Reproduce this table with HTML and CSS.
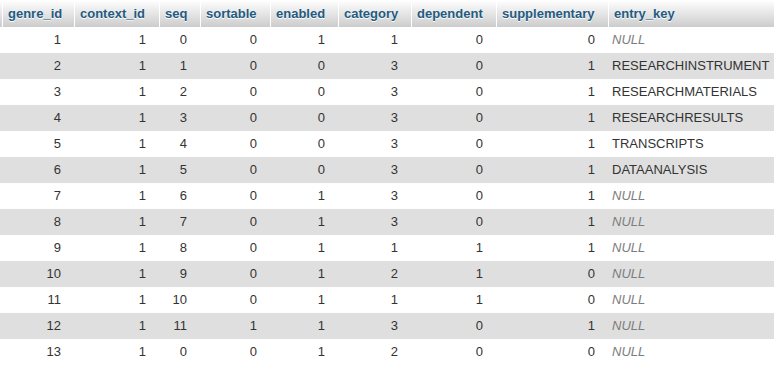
FILE: index.html
```html
<!DOCTYPE html>
<html>
<head>
<meta charset="utf-8">
<link rel="stylesheet" href="styles.css">
</head>
<body>
<table class="data">
  <thead>
    <tr>
      <th class="cut"></th>
      <th class="c-genre">genre_id</th>
      <th class="c-context">context_id</th>
      <th class="c-seq">seq</th>
      <th class="c-sortable">sortable</th>
      <th class="c-enabled">enabled</th>
      <th class="c-category">category</th>
      <th class="c-dependent">dependent</th>
      <th class="c-supp">supplementary</th>
      <th class="c-key">entry_key</th>
    </tr>
  </thead>
  <tbody>
    <tr><td class="cut"></td><td class="num">1</td><td class="num">1</td><td class="num">0</td><td class="num">0</td><td class="num">1</td><td class="num">1</td><td class="num">0</td><td class="num">0</td><td class="txt null">NULL</td></tr>
    <tr><td class="cut"></td><td class="num">2</td><td class="num">1</td><td class="num">1</td><td class="num">0</td><td class="num">0</td><td class="num">3</td><td class="num">0</td><td class="num">1</td><td class="txt">RESEARCHINSTRUMENT</td></tr>
    <tr><td class="cut"></td><td class="num">3</td><td class="num">1</td><td class="num">2</td><td class="num">0</td><td class="num">0</td><td class="num">3</td><td class="num">0</td><td class="num">1</td><td class="txt">RESEARCHMATERIALS</td></tr>
    <tr><td class="cut"></td><td class="num">4</td><td class="num">1</td><td class="num">3</td><td class="num">0</td><td class="num">0</td><td class="num">3</td><td class="num">0</td><td class="num">1</td><td class="txt">RESEARCHRESULTS</td></tr>
    <tr><td class="cut"></td><td class="num">5</td><td class="num">1</td><td class="num">4</td><td class="num">0</td><td class="num">0</td><td class="num">3</td><td class="num">0</td><td class="num">1</td><td class="txt">TRANSCRIPTS</td></tr>
    <tr><td class="cut"></td><td class="num">6</td><td class="num">1</td><td class="num">5</td><td class="num">0</td><td class="num">0</td><td class="num">3</td><td class="num">0</td><td class="num">1</td><td class="txt">DATAANALYSIS</td></tr>
    <tr><td class="cut"></td><td class="num">7</td><td class="num">1</td><td class="num">6</td><td class="num">0</td><td class="num">1</td><td class="num">3</td><td class="num">0</td><td class="num">1</td><td class="txt null">NULL</td></tr>
    <tr><td class="cut"></td><td class="num">8</td><td class="num">1</td><td class="num">7</td><td class="num">0</td><td class="num">1</td><td class="num">3</td><td class="num">0</td><td class="num">1</td><td class="txt null">NULL</td></tr>
    <tr><td class="cut"></td><td class="num">9</td><td class="num">1</td><td class="num">8</td><td class="num">0</td><td class="num">1</td><td class="num">1</td><td class="num">1</td><td class="num">1</td><td class="txt null">NULL</td></tr>
    <tr><td class="cut"></td><td class="num">10</td><td class="num">1</td><td class="num">9</td><td class="num">0</td><td class="num">1</td><td class="num">2</td><td class="num">1</td><td class="num">0</td><td class="txt null">NULL</td></tr>
    <tr><td class="cut"></td><td class="num">11</td><td class="num">1</td><td class="num">10</td><td class="num">0</td><td class="num">1</td><td class="num">1</td><td class="num">1</td><td class="num">0</td><td class="txt null">NULL</td></tr>
    <tr><td class="cut"></td><td class="num">12</td><td class="num">1</td><td class="num">11</td><td class="num">1</td><td class="num">1</td><td class="num">3</td><td class="num">0</td><td class="num">1</td><td class="txt null">NULL</td></tr>
    <tr><td class="cut"></td><td class="num">13</td><td class="num">1</td><td class="num">0</td><td class="num">0</td><td class="num">1</td><td class="num">2</td><td class="num">0</td><td class="num">0</td><td class="txt null">NULL</td></tr>
  </tbody>
</table>
</body>
</html>
```

FILE: styles.css
```css
html, body {
  margin: 0;
  padding: 0;
  background: #fff;
}

body {
  font-family: "Liberation Sans", Arial, Helvetica, sans-serif;
  font-size: 13px;
  color: #333;
}

.data {
  width: 774px;
  table-layout: fixed;
  border-collapse: separate;
  border-spacing: 0;
}

.data th {
  background: linear-gradient(#ffffff, #cccccc);
  color: #235a81;
  font-weight: bold;
  text-align: left;
  text-shadow: 0 1px 0 #fff;
  padding: 5px 12px 5px 5px;
  line-height: 17px;
  border-left: 1px solid #fff;
  white-space: nowrap;
  overflow: hidden;
}

.data th.cut {
  width: 2px;
  padding: 0;
  border-left: none;
}

.c-genre { width: 54px; }
.c-context { width: 67px; }
.c-seq { width: 23px; }
.c-sortable { width: 52px; }
.c-enabled { width: 50px; }
.c-category { width: 55px; }
.c-dependent { width: 67px; }
.c-supp { width: 94px; }
.data th.c-key { width: 156px; padding-right: 4px; }

.data td {
  padding: 5px 4px;
  line-height: 16px;
  white-space: nowrap;
  border-left: 1px solid transparent;
}

.data td.cut {
  padding: 0;
  border-left: none;
}

.data tbody tr:nth-child(even) td {
  background: #dfdfdf;
}

.data td.num {
  text-align: right;
  padding-right: 13px;
}

.data td.txt {
  padding-left: 3px;
  padding-right: 0;
}

.data td.null {
  font-style: italic;
  color: #7d7d7d;
}
```
